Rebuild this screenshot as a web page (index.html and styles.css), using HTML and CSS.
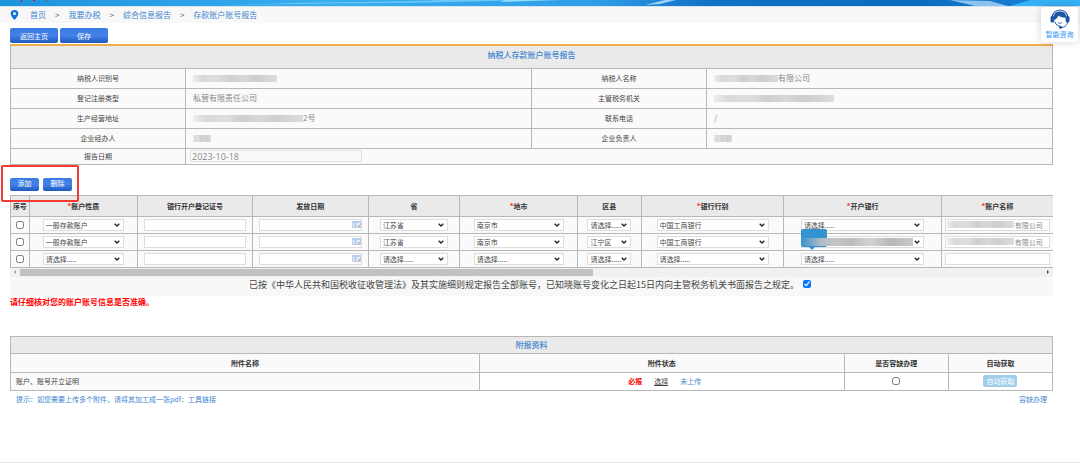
FILE: index.html
```html
<!DOCTYPE html>
<html lang="zh-CN">
<head>
<meta charset="utf-8">
<title>存款账户账号报告</title>
<link rel="stylesheet" href="styles.css">
</head>
<body>
<header class="banner">
  <svg class="banner-art" viewBox="0 0 1080 6" preserveAspectRatio="none" aria-hidden="true">
    <path d="M225 6C300 2 420 4 520 0H440C380 3 300 1 225 6Z" fill="#7fd6fa" opacity=".7"/>
    <path d="M500 2L560 0H530L505 0Z" fill="#8fe0ff"/>
    <path d="M645 5L665 0H676L660 4Z" fill="#9bd2f5"/>
    <path d="M950 0L975 6H1008L990 1Z" fill="#8cc3ee"/>
    <path d="M1010 6L1030 0H1080V6Z" fill="#35b1f5"/>
    <path d="M21 0h1v2h-1zM33 0h2v1h-2zM46 0h1v1h-1z" fill="#c8102e"/>
  </svg>
</header>
<nav class="crumbs" aria-label="位置">
  <svg class="pin" viewBox="0 0 8 10" aria-hidden="true"><path d="M4 0a3.8 3.8 0 0 0-3.8 3.8C.2 6.400 4 10 4 10s3.800-3.600 3.800-6.200A3.800 3.800 0 0 0 4 0Z" fill="#1173d6"/><circle cx="4" cy="3.700" r="1.400" fill="#fff"/></svg>
  <a href="#">首页</a><span>&gt;</span><a href="#">我要办税</a><span>&gt;</span><a href="#">综合信息报告</a><span>&gt;</span><a href="#">存款账户账号报告</a>
</nav>
<a class="service" href="#">
  <svg viewBox="0 0 20 20" aria-hidden="true">
    <path d="M2 9A8 8 0 0 1 18 9" fill="none" stroke="#1c55a8" stroke-width="1.200"/>
    <path d="M3.500 11C2.500 4 7 2.500 10 2.500S17.500 4 16.500 11L15 8.500C12 8.500 10 8 8.500 6.500C7.500 9 6 10 5 10.500Z" fill="#1c55a8"/>
    <rect x=".5" y="7" width="3.800" height="6.500" rx="1.600" fill="#1c55a8"/>
    <rect x="15.700" y="7" width="3.800" height="6.500" rx="1.600" fill="#1c55a8"/>
    <path d="M5 13C6 16 8 17 10 17M17.500 13C17 17 14 18.500 11 18.500" fill="none" stroke="#1c55a8" stroke-width="1"/>
    <path d="M8 13.500Q10 15.500 12 13.500" fill="none" stroke="#1c55a8" stroke-width=".8"/>
    <circle cx="10.500" cy="18.300" r="1.500" fill="#1c55a8"/>
  </svg>
  <span>智能咨询</span>
</a>
<main class="page">
  <div class="actions">
    <button class="btn" type="button">返回主页</button>
    <button class="btn" type="button">保存</button>
  </div>

  <table class="sheet info">
    <colgroup><col class="c-label"><col class="c-value"><col class="c-label"><col class="c-value"></colgroup>
    <tr><th class="title" colspan="4">纳税人存款账户账号报告</th></tr>
    <tr><th>纳税人识别号</th><td><i class="mosaic w84"></i></td><th>纳税人名称</th><td><i class="mosaic w64"></i>有限公司</td></tr>
    <tr><th>登记注册类型</th><td>私营有限责任公司</td><th>主管税务机关</th><td><i class="mosaic w120"></i></td></tr>
    <tr><th>生产经营地址</th><td><i class="mosaic w110"></i>2号</td><th>联系电话</th><td>/</td></tr>
    <tr><th>企业经办人</th><td><i class="mosaic w18"></i></td><th>企业负责人</th><td><i class="mosaic w18"></i></td></tr>
    <tr class="date-row"><th><label for="date">报告日期</label></th><td colspan="3"><input id="date" class="date" value="2023-10-18" readonly></td></tr>
  </table>

  <div class="row-tools">
    <button class="btn small" type="button">添加</button>
    <button class="btn small" type="button">删除</button>
    <span class="highlight"></span>
  </div>

  <table class="sheet accounts">
    <colgroup><col class="a1"><col class="a2"><col class="a3"><col class="a4"><col class="a5"><col class="a6"><col class="a7"><col class="a8"><col class="a9"><col class="a10"></colgroup>
    <tr><th>序号</th><th><b>*</b>账户性质</th><th>银行开户登记证号</th><th>发放日期</th><th>省</th><th><b>*</b>地市</th><th>区县</th><th><b>*</b>银行行别</th><th><b>*</b>开户银行</th><th><b>*</b>账户名称</th></tr>
    <tr>
      <td><input type="checkbox" aria-label="选择第1行"></td>
      <td><select class="s-type" aria-label="账户性质"><option>一般存款账户</option></select></td>
      <td><input class="field" aria-label="银行开户登记证号"></td>
      <td><span class="day"><input class="field" aria-label="发放日期"><svg viewBox="0 0 10 8" aria-hidden="true"><path d="M0 0H9V7H0Z" fill="#b9cdec"/><path d="M1 2H8V6H1Z" fill="#e9f0fa"/><path d="M2 3H5M2 5H5" stroke="#9ab6e0"/><path d="M6 4H8V6H6Z" fill="#e9a9a0"/></svg></span></td>
      <td><select class="s-prov" aria-label="省"><option>江苏省</option></select></td>
      <td><select class="s-city" aria-label="地市"><option>南京市</option></select></td>
      <td><select class="s-dist" aria-label="区县"><option>请选择.....</option></select></td>
      <td><select class="s-kind" aria-label="银行行别"><option>中国工商银行</option></select></td>
      <td><select class="s-bank" aria-label="开户银行"><option>请选择.....</option></select></td>
      <td><span class="masked"><input class="field" aria-label="账户名称" value="有限公司"><i class="mosaic"></i></span></td>
    </tr>
    <tr>
      <td><input type="checkbox" aria-label="选择第2行"></td>
      <td><select class="s-type" aria-label="账户性质"><option>一般存款账户</option></select></td>
      <td><input class="field" aria-label="银行开户登记证号"></td>
      <td><span class="day"><input class="field" aria-label="发放日期"><svg viewBox="0 0 10 8" aria-hidden="true"><path d="M0 0H9V7H0Z" fill="#b9cdec"/><path d="M1 2H8V6H1Z" fill="#e9f0fa"/><path d="M2 3H5M2 5H5" stroke="#9ab6e0"/><path d="M6 4H8V6H6Z" fill="#e9a9a0"/></svg></span></td>
      <td><select class="s-prov" aria-label="省"><option>江苏省</option></select></td>
      <td><select class="s-city" aria-label="地市"><option>南京市</option></select></td>
      <td><select class="s-dist" aria-label="区县"><option>江宁区</option></select></td>
      <td><select class="s-kind" aria-label="银行行别"><option>中国工商银行</option></select></td>
      <td><span class="bank-masked"><select class="s-bank" aria-label="开户银行"><option></option></select><span class="tip"></span><i class="mosaic dark"></i></span></td>
      <td><span class="masked"><input class="field" aria-label="账户名称" value="有限公司"><i class="mosaic"></i></span></td>
    </tr>
    <tr>
      <td><input type="checkbox" aria-label="选择第3行"></td>
      <td><select class="s-type" aria-label="账户性质"><option>请选择.....</option></select></td>
      <td><input class="field" aria-label="银行开户登记证号"></td>
      <td><span class="day"><input class="field" aria-label="发放日期"><svg viewBox="0 0 10 8" aria-hidden="true"><path d="M0 0H9V7H0Z" fill="#b9cdec"/><path d="M1 2H8V6H1Z" fill="#e9f0fa"/><path d="M2 3H5M2 5H5" stroke="#9ab6e0"/><path d="M6 4H8V6H6Z" fill="#e9a9a0"/></svg></span></td>
      <td><select class="s-prov" aria-label="省"><option>请选择.....</option></select></td>
      <td><select class="s-city" aria-label="地市"><option>请选择.....</option></select></td>
      <td><select class="s-dist" aria-label="区县"><option>请选择.....</option></select></td>
      <td><select class="s-kind" aria-label="银行行别"><option>请选择.....</option></select></td>
      <td><select class="s-bank" aria-label="开户银行"><option>请选择.....</option></select></td>
      <td><input class="field" aria-label="账户名称"></td>
    </tr>
  </table>
  <div class="scrollbar">
    <svg viewBox="0 0 10 8" aria-hidden="true"><path d="M6 2V6L4 4Z" fill="#a0a0a0"/></svg>
    <span class="track"><span class="thumb"></span></span>
    <svg viewBox="0 0 10 8" aria-hidden="true"><path d="M4 2V6L6 4Z" fill="#404040"/></svg>
  </div>
  <div class="agree">
    <label for="agree">已按《中华人民共和国税收征收管理法》及其实施细则规定报告全部账号，已知晓账号变化之日起15日内向主管税务机关书面报告之规定。</label>
    <input id="agree" type="checkbox" checked>
  </div>
  <p class="warning">请仔细核对您的账户账号信息是否准确。</p>

  <table class="sheet files">
    <colgroup><col class="f1"><col class="f2"><col class="f3"><col class="f4"></colgroup>
    <tr><th class="title" colspan="4">附报资料</th></tr>
    <tr class="heads"><th>附件名称</th><th>附件状态</th><th>是否容缺办理</th><th>自动获取</th></tr>
    <tr class="file"><td class="name">账户、账号开立证明</td>
      <td><span class="state"><strong>必报</strong><a href="#">选择</a><em>未上传</em></span></td>
      <td><input type="checkbox" aria-label="容缺办理"></td>
      <td><button class="fetch" type="button" disabled>自动获取</button></td></tr>
  </table>
  <div class="hint"><span>提示：如您需要上传多个附件，请将其加工成一张pdf：<a href="#">工具链接</a></span><a href="#">容缺办理</a></div>
</main>
<footer class="foot"></footer>
</body>
</html>
```

FILE: styles.css
```css
* { box-sizing: border-box; }
body {
  margin: 0;
  min-height: 100vh;
  display: flex;
  flex-direction: column;
  background: #fff;
  color: #444;
  font: 7px/10px "Noto Sans CJK SC", sans-serif;
}
a { text-decoration: none; color: #3f86cf; }
input, select, button { font: inherit; color: inherit; margin: 0; }
input[type="checkbox"] { width: 8px; height: 8px; display: block; margin: 0 auto; }

.banner { height: 6px; background: linear-gradient(90deg, #1b93dc, #38adf0 30%, #2f9ee9 55%, #1271c6 66%, #0d6cc0 85%, #1c86da); }
.banner-art { display: block; width: 100%; height: 6px; }
.crumbs {
  display: flex;
  align-items: center;
  gap: 9px;
  height: 17px;
  padding-left: 10px;
  background: #f8f8f8;
  border-top: 1px solid #d5e6f3;
  font-size: 8px;
  color: #555;
}
.crumbs .pin { width: 9px; height: 10px; margin-right: 2px; }

.service {
  position: absolute;
  top: 7px;
  right: 2px;
  z-index: 2;
  width: 37px;
  height: 35px;
  padding-top: 2px;
  display: flex;
  flex-direction: column;
  align-items: center;
  background: #fff;
  border-radius: 3px;
  box-shadow: 0 0 8px rgba(0, 0, 0, .18);
  color: #2c93f5;
}
.service svg { width: 20px; height: 20px; }

.page { flex: 1; padding: 0 27px 0 10px; }
.actions { display: flex; gap: 2px; padding: 5px 0 1px; }
.btn {
  width: 48px;
  height: 15px;
  padding: 0;
  border: 0;
  border-radius: 2px;
  background: linear-gradient(#3a7ce0, #4481ea 50%, #1d58bb);
  color: #fff;
  line-height: 14px;
}
.btn.small { width: 29px; height: 13px; line-height: 10px; padding-bottom: 3px; }

.sheet { width: 100%; border-collapse: collapse; table-layout: fixed; background: #fafafa; }
.sheet th, .sheet td { border: 1px solid #b8b8b8; padding: 0; font-weight: 400; text-align: center; }
.sheet .title { background: #eaeaea; color: #3f86cf; font-size: 8px; font-weight: 500; }

.info tr { height: 20px; }
.info tr:first-child { height: 23px; }
.info .title { border-top: 2px solid #f0ad4e; padding-bottom: 3px; }
.info .date-row { height: 16px; }
.info td { padding-left: 7px; text-align: left; font-size: 8px; color: #888; }
.info .date-row td { padding-left: 4px; }
.c-label { width: 16.8%; }
.c-value { width: 33.2%; }
.date {
  display: block;
  width: 172px;
  height: 12px;
  padding: 0 1px;
  border: 1px solid #e2e2e2;
  background: #fafafa;
  color: #888;
  font: 9px/10px "Open Sans", sans-serif;
}

.mosaic {
  display: inline-block;
  height: 7px;
  vertical-align: middle;
  background: linear-gradient(90deg, #ededed, #d9d9d9 12%, #dedede 30%, #cecece 45%, #d8d8d8 60%, #cdcdcd 75%, #dcdcdc);
}
.mosaic.dark { background: linear-gradient(90deg, rgba(198, 208, 216, 0), #b2bcc4 18%, #c4c4c4 30%, #bdbdbd 45%, #d2d2d2 62%, #b8b8b8 80%, #c9c9c9); }
.w84 { width: 84px; }
.w64 { width: 64px; }
.w120 { width: 120px; }
.w110 { width: 110px; }
.w18 { width: 18px; }

.row-tools { position: relative; display: flex; gap: 4px; padding: 13px 0 4px; }
.highlight {
  position: absolute;
  z-index: 1;
  left: -9px;
  top: 0;
  width: 78px;
  height: 37px;
  border: 2px solid #f53b31;
  border-radius: 2px;
  pointer-events: none;
}

.accounts tr { height: 17px; }
.accounts tr:first-child { height: 21px; }
.accounts th { background: #eaeaea; color: #333; font-weight: 700; white-space: nowrap; }
.accounts th b { color: #f33; }
.accounts th:last-child, .accounts td:last-child { border-right: 0; }
.a1 { width: 1.8%; }
.a2 { width: 10.4%; }
.a3 { width: 11%; }
.a4 { width: 11.1%; }
.a5 { width: 8.8%; }
.a6 { width: 11.3%; }
.a7 { width: 6.1%; }
.a8 { width: 13.7%; }
.a9 { width: 15.1%; }
.a10 { width: 10.7%; }
select {
  appearance: none;
  display: block;
  height: 12px;
  margin: 0 auto;
  padding: 0 8px 0 2px;
  border: 1px solid #ddd;
  border-radius: 0;
  background: #fff url("data:image/svg+xml,%3Csvg xmlns='http://www.w3.org/2000/svg' viewBox='0 0 6 4'%3E%3Cpath d='M.7.7L3 3L5.300.7' fill='none' stroke='%23222' stroke-width='1.300'/%3E%3C/svg%3E") no-repeat right 3px center / 6px 4px;
  line-height: 10px;
}
.s-type { width: 76%; }
.s-prov { width: 75%; }
.s-city { width: 77%; }
.s-dist { width: 70%; }
.s-kind { width: 79%; }
.s-bank { width: 79%; }
.field { display: block; width: 90%; height: 12px; margin: 0 auto; padding: 0 3px; border: 1px solid #ddd; background: #fff; }
.accounts td:last-child .field { width: 94%; }
.day, .masked, .bank-masked { position: relative; display: block; }
.day svg { position: absolute; right: 6px; top: 2px; width: 10px; height: 8px; }
.masked .field { text-align: right; padding-right: 6px; color: #888; }
.masked .mosaic { position: absolute; left: 5px; top: 2px; width: 67px; }
.bank-masked .mosaic { position: absolute; left: 17px; right: 28px; top: 2px; height: 8px; }
.tip { position: absolute; left: 17px; top: -7px; width: 26px; height: 18px; border-radius: 2px; background: #3493cf; }
.tip::after { content: ""; position: absolute; left: 8px; top: 18px; border: 3px solid transparent; border-top-color: #2f93cf; border-bottom: 0; }

.scrollbar { display: flex; align-items: center; height: 9px; background: #f1f1f1; }
.scrollbar svg { width: 10px; height: 8px; }
.track { flex: 1; height: 7px; }
.thumb { display: block; width: 56%; height: 7px; background: #c1c1c1; }
.agree { display: flex; justify-content: center; align-items: flex-start; gap: 4px; height: 19px; padding: 2px 3px 0 0; background: #f8f8f8; font-size: 9px; line-height: 12px; }
.agree input[type="checkbox"] { margin: 1px 0 0; }
.warning { margin: 1px 0 29px; color: #f00; font-size: 8px; font-weight: 700; }

.files tr:first-child { height: 17px; }
.files .heads { height: 19px; }
.files .heads th { color: #333; font-weight: 700; }
.files .file { height: 18px; background: #fff; }
.files .file td.name { padding-left: 5px; text-align: left; background: #fafafa; }
.f1 { width: 45%; }
.f2 { width: 35%; }
.f3 { width: 10%; }
.f4 { width: 10%; }
.state { display: flex; justify-content: center; gap: 12px; padding-left: 6px; }
.state strong { color: #f00; }
.state a { color: #444; text-decoration: underline; }
.state em { color: #3f86cf; font-style: normal; }
.fetch { display: block; margin: 0 auto; width: 34px; height: 12px; padding: 0; border: 0; border-radius: 2px; background: #9fcdeb; color: #fff; line-height: 12px; }
.hint { display: flex; justify-content: space-between; padding: 3px 6px; color: #3f86cf; }
.foot { height: 1px; background: #e4e4e4; }
```
